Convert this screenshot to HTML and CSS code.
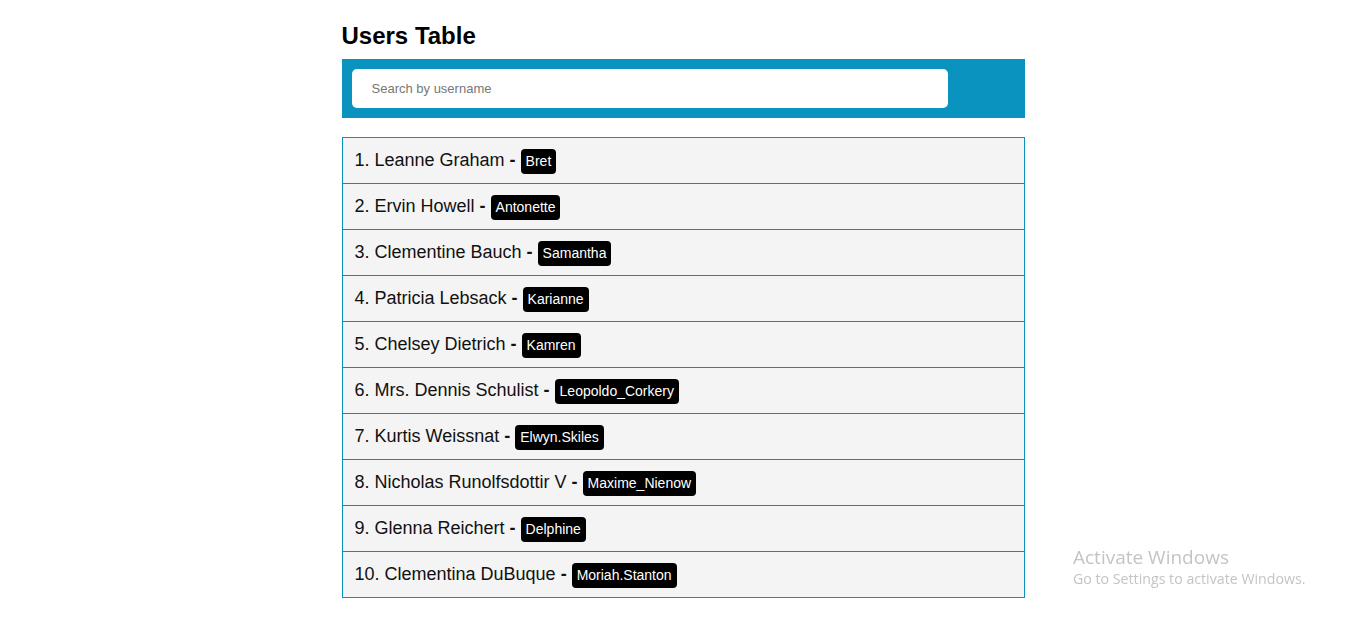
FILE: index.html
```html
<!DOCTYPE html>
<html>
<head>
<meta charset="utf-8">
<link rel="stylesheet" href="styles.css">
</head>
<body>
<div class="page">
  <h1 class="title">Users Table</h1>
  <div class="search-bar">
    <input class="search-input" type="text" placeholder="Search by username">
  </div>
  <ul class="users">
    <li class="user">1. Leanne Graham <b class="dash">-</b><span class="badge">Bret</span></li>
    <li class="user">2. Ervin Howell <b class="dash">-</b><span class="badge">Antonette</span></li>
    <li class="user">3. Clementine Bauch <b class="dash">-</b><span class="badge">Samantha</span></li>
    <li class="user">4. Patricia Lebsack <b class="dash">-</b><span class="badge">Karianne</span></li>
    <li class="user">5. Chelsey Dietrich <b class="dash">-</b><span class="badge">Kamren</span></li>
    <li class="user">6. Mrs. Dennis Schulist <b class="dash">-</b><span class="badge">Leopoldo_Corkery</span></li>
    <li class="user">7. Kurtis Weissnat <b class="dash">-</b><span class="badge">Elwyn.Skiles</span></li>
    <li class="user">8. Nicholas Runolfsdottir V <b class="dash">-</b><span class="badge">Maxime_Nienow</span></li>
    <li class="user">9. Glenna Reichert <b class="dash">-</b><span class="badge">Delphine</span></li>
    <li class="user">10. Clementina DuBuque <b class="dash">-</b><span class="badge">Moriah.Stanton</span></li>
  </ul>
</div>
<div class="watermark">
  <div class="wm-title">Activate Windows</div>
  <div class="wm-sub">Go to Settings to activate Windows.</div>
</div>
</body>
</html>
```
FILE: styles.css
```css
html, body {
  margin: 0;
  padding: 0;
  background: #ffffff;
  font-family: "Liberation Sans", Arial, sans-serif;
  color: #111;
}
.page {
  width: 683px;
  margin: 0 auto;
  padding-top: 22px;
}
.title {
  margin: 0 0 9px 0;
  font-size: 24px;
  font-weight: bold;
  line-height: 28px;
  color: #000;
}
.search-bar {
  background: #0b93c0;
  height: 59px;
  box-sizing: border-box;
  padding: 10px;
}
.search-input {
  display: block;
  width: 596px;
  height: 39px;
  box-sizing: border-box;
  border: none;
  border-radius: 5px;
  padding: 0 20px;
  font-family: "Liberation Sans", Arial, sans-serif;
  font-size: 13px;
  outline: none;
  background: #fff;
}
.search-input::placeholder {
  color: #777;
}
.users {
  list-style: none;
  margin: 19px 0 0 0;
  padding: 0;
  border: 1px solid #0b93c0;
}
.user {
  background: #f4f4f4;
  height: 45px;
  display: flex;
  align-items: center;
  padding-left: 12px;
  font-size: 18px;
  color: #111;
  white-space: pre;
  border-bottom: 1px solid #1a86ad;
}
.user:last-child {
  border-bottom: none;
}
.dash {
  font-weight: bold;
}
.badge {
  display: inline-block;
  background: #000;
  color: #fff;
  font-size: 14px;
  line-height: 17px;
  padding: 4px 5px;
  border-radius: 4px;
  margin-top: 2px;
  margin-left: 5px;
}
.watermark {
  position: fixed;
  left: 1073px;
  top: 545px;
  color: #c4c4c4;
  font-family: "Open Sans", "Noto Sans", sans-serif;
}
.wm-title {
  font-size: 19px;
  line-height: 24px;
}
.wm-sub {
  font-size: 14.2px;
  line-height: 20px;
}
```
